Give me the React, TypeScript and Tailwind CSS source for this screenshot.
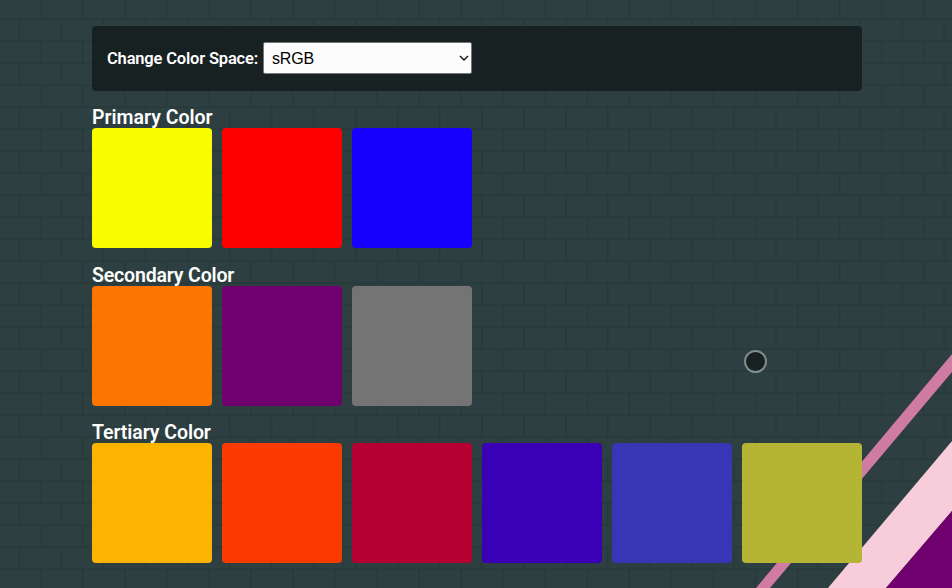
import React from 'react';

const groups = [
  { title: 'Primary Color', tracking: 'tracking-[0px]', colors: ['bg-[#fafd00]', 'bg-[#ff0000]', 'bg-[#1800ff]'] },
  { title: 'Secondary Color', tracking: 'tracking-[-0.16px]', colors: ['bg-[#fb7500]', 'bg-[#71006f]', 'bg-[#747474]'] },
  {
    title: 'Tertiary Color',
    tracking: 'tracking-[-0.07px]',
    colors: ['bg-[#fbb500]', 'bg-[#fb3a02]', 'bg-[#b50032]', 'bg-[#3900b5]', 'bg-[#3935b4]', 'bg-[#b4b535]'],
  },
];

function Backdrop() {
  return (
    <svg className="absolute inset-0" width="952" height="588" viewBox="0 0 952 588" aria-hidden="true">
      <defs>
        <pattern id="bricks" width="42.04" height="44" x="18.5" y="18.5" patternUnits="userSpaceOnUse">
          <rect width="42.04" height="44" fill="#2d3f40" />
          <g fill="#31464540">
            <rect x="2" y="2" width="39" height="1" />
            <rect y="24" width="20" height="1" />
            <rect x="23" y="24" width="19" height="1" />
          </g>
          <g fill="#27393b">
            <rect width="42.04" height="1.6" />
            <rect y="22" width="42.04" height="1.6" />
            <rect width="1.6" height="22" />
            <rect x="21.5" y="22" width="1.6" height="22" />
          </g>
        </pattern>
      </defs>
      <rect width="952" height="588" fill="url(#bricks)" />
      <path d="M952 354 756 588H770L952 372Z" fill="#cf7ba3" />
      <path d="M952 441 828 588H886L952 511Z" fill="#f7cddb" />
      <path d="M952 511 886 588H952Z" fill="#71006f" />
    </svg>
  );
}

export default function App() {
  return (
    <main className="relative h-[588px] w-[952px] overflow-hidden bg-[#2d3f40] font-[Roboto,sans-serif] text-white">
      <Backdrop />
      <div className="relative ml-[92px] w-[770px] pt-[26px]">
        <div className="flex h-[65px] items-center rounded-[4px] bg-[#182122] pl-[15px]">
          <label htmlFor="space" className="w-[156px] whitespace-nowrap pt-px text-[16.5px] leading-none font-semibold tracking-[-0.18px]">
            Change Color Space:
          </label>
          <div className="-mt-px">
            <div className="relative">
              <select
                id="space"
                className="block h-8 w-[209px] appearance-none rounded-[2px] border border-[#777] bg-[#fcfcfc] pt-px pl-2 font-['Liberation_Sans',sans-serif] text-[16px] tracking-[-0.2px] text-black"
              >
                <option>sRGB</option>
              </select>
              <svg className="pointer-events-none absolute top-[12px] right-[3px]" width="10" height="8" viewBox="0 0 10 8" fill="none">
                <path d="M1 2 5 6 9 2" stroke="#111" strokeWidth="1.4" />
              </svg>
            </div>
          </div>
        </div>
        <div className="mt-[14px] flex flex-col gap-[14.6px]">
          {groups.map((g) => (
            <section key={g.title}>
              <h2 className={`h-[23px] whitespace-nowrap text-[19.5px] leading-[26px] font-semibold ${g.tracking}`}>{g.title}</h2>
              <div className="flex gap-[10px]">
                {g.colors.map((c) => (
                  <div key={c} className={`h-[120px] w-[120px] rounded-[4px] ${c}`} />
                ))}
              </div>
            </section>
          ))}
        </div>
      </div>
      <div className="absolute top-[350px] left-[744px] h-[23px] w-[23px] rounded-full border-2 border-[#7f8d8d] bg-[#182122]" />
    </main>
  );
}
